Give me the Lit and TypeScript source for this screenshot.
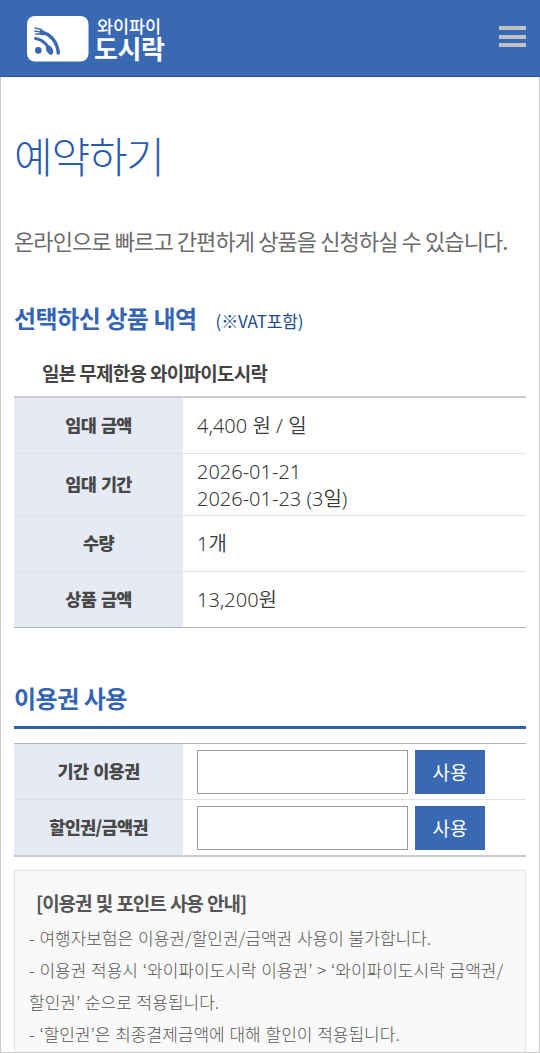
import { LitElement, html, css } from "lit";
import { customElement } from "lit/decorators.js";

@customElement("app-root")
export class AppRoot extends LitElement {
  static styles = css`
    :host {
      display: block;
      height: 1053px;
      overflow: hidden;
      box-sizing: border-box;
      background: #fff;
      font-family: "Noto Sans CJK KR", sans-serif;
      color: #444;
    }
    * { box-sizing: border-box; }
    .page { display: flex; flex-direction: column; height: 1053px; }
    header {
      flex: none;
      height: 77px;
      padding: 0 14px 4px 26px;
      background: #3a69b3;
      border-bottom: 1px solid #2b5196;
      display: flex;
      align-items: center;
      justify-content: space-between;
    }
    .brand { display: flex; align-items: center; gap: 5px; color: #fff; padding-top: 5px; }
    .logo { display: block; width: 63px; height: 46px; }
    .name { display: flex; flex-direction: column; white-space: nowrap; }
    .small { font-size: 17.5px; line-height: 19px; font-weight: 500; letter-spacing: -0.1px; padding-left: 3px; }
    .big { font-size: 26px; line-height: 26px; font-weight: 700; letter-spacing: -0.4px; }
    .menu { display: flex; flex-direction: column; gap: 4.5px; padding-top: 1px; }
    .menu span { width: 27px; height: 4px; background: #c1c1c1; }
    main {
      flex: 1;
      min-height: 0;
      overflow: hidden;
      border: 1px solid #c9c9c9;
      border-top: 0;
      padding: 0 13px;
    }
    h1, h2, p { margin: 0; white-space: nowrap; }
    h1 { margin-top: 48px; font-size: 42px; line-height: 60px; font-weight: 300; letter-spacing: -1.2px; color: #2a5cb0; }
    .lead { margin-top: 39px; font-size: 22px; line-height: 32px; font-weight: 400; letter-spacing: -0.9px; color: #6b6b6b; }
    h2 { font-size: 24px; line-height: 36px; font-weight: 700; letter-spacing: -0.5px; color: #3465b4; }
    .picked { margin-top: 44px; display: flex; align-items: baseline; gap: 19px; }
    .vat { font-size: 17px; letter-spacing: -0.1px; color: #1b4c87; white-space: nowrap; }
    .product { margin-top: 23px; padding-left: 28px; height: 37px; font-size: 19px; line-height: 28px; font-weight: 600; letter-spacing: -0.7px; }
    .table { border-top: 2px solid #c9cbd2; border-bottom: 1px solid #aeb1ba; }
    .row { display: flex; height: 56px; border-top: 1px solid #dfe2ec; }
    .row:first-child { border-top: 0; height: 55px; }
    .row.tall { height: 62px; }
    .th { width: 169px; padding-bottom: 3px; background: #e6eaf4; display: flex; align-items: center; justify-content: center; font-size: 17.5px; font-weight: 900; letter-spacing: -0.7px; word-spacing: 1.5px; color: #484848; }
    .td { flex: 1; display: flex; flex-direction: column; justify-content: center; padding-left: 14px; font-family: "Noto Sans", "Noto Sans CJK KR", sans-serif; font-size: 20px; line-height: 27px; font-weight: 350; color: #3a3a3a; }
    .use { margin-top: 53px; height: 48px; line-height: 34px; border-bottom: 3px solid #2f60b0; }
    .coupon { margin-top: 14px; border-top: 1px solid #aeb1ba; border-bottom: 2px solid #c9cbd2; }
    .coupon .td { flex-direction: row; align-items: center; justify-content: flex-start; gap: 7px; padding-top: 1px; }
    input { width: 211px; height: 44px; border: 1px solid #999; background: #fff; margin: 0; padding: 0 8px; border-radius: 0; font: inherit; }
    button { width: 70px; height: 44px; border: 0; padding: 0 0 2px; margin: 0; background: #3a69b3; color: #fff; font: 400 19px "Noto Sans CJK KR", sans-serif; }
    .notice { margin-top: 13px; height: 260px; border: 1px solid #e6e6e6; background: #f9f9f9; padding: 16px 14px; font-size: 17px; line-height: 32px; font-weight: 300; word-spacing: 1px; color: #555; }
    .notice strong { display: block; margin-bottom: 3px; padding-left: 7px; font-size: 19px; font-weight: 700; letter-spacing: -1.05px; color: #555; }
  `;

  private rows = [
    { label: "임대 금액", lines: ["4,400 원 / 일"] },
    { label: "임대 기간", lines: ["2026-01-21", "2026-01-23 (3일)"] },
    { label: "수량", lines: ["1개"] },
    { label: "상품 금액", lines: ["13,200원"] },
  ];

  private notes = [
    "- 여행자보험은 이용권/할인권/금액권 사용이 불가합니다.",
    "- 이용권 적용시 ‘와이파이도시락 이용권’ > ‘와이파이도시락 금액권/",
    "할인권’ 순으로 적용됩니다.",
    "- ‘할인권’은 최종결제금액에 대해 할인이 적용됩니다.",
  ];

  render() {
    return html`
      <div class="page">
        <header>
          <div class="brand">
            <svg class="logo" viewBox="0 0 63 46">
              <rect x="1" y="0" width="61.5" height="45.5" rx="8" fill="#fff" />
              <g fill="none" stroke="#3a69b3" stroke-linecap="round">
                <path d="M16 16.5C25 18 31.500 27 32.300 37" stroke-width="3.4" />
                <path d="M9.500 22.500Q17 23.500 22 31" stroke-width="3" />
                <path d="M9 12L15.500 13.600M8.800 15L15 16.200M9.500 18L15 18" stroke-width="1.3" />
              </g>
              <path d="M14.500 12.600L20 16.500L17.500 19.500L13.500 18.600Z" fill="#3a69b3" />
              <ellipse cx="23.6" cy="34" rx="3.1" ry="5" transform="rotate(-28 23.6 34)" fill="#3a69b3" />
              <circle cx="12.3" cy="34.4" r="3.3" fill="#3a69b3" />
            </svg>
            <div class="name"><span class="small">와이파이</span><span class="big">도시락</span></div>
          </div>
          <div class="menu"><span></span><span></span><span></span></div>
        </header>
        <main>
          <h1>예약하기</h1>
          <p class="lead">온라인으로 빠르고 간편하게 상품을 신청하실 수 있습니다.</p>
          <div class="picked"><h2>선택하신 상품 내역</h2><span class="vat">(※VAT포함)</span></div>
          <p class="product">일본 무제한용 와이파이도시락</p>
          <div class="table">
            ${this.rows.map((r) => html`
              <div class="row ${r.lines.length > 1 ? "tall" : ""}">
                <div class="th">${r.label}</div>
                <div class="td">${r.lines.map((l) => html`<span>${l}</span>`)}</div>
              </div>`)}
          </div>
          <h2 class="use">이용권 사용</h2>
          <div class="coupon">
            ${["기간 이용권", "할인권/금액권"].map((l) => html`
              <div class="row">
                <div class="th">${l}</div>
                <div class="td"><input type="text" aria-label=${l} /><button>사용</button></div>
              </div>`)}
          </div>
          <div class="notice">
            <strong>[이용권 및 포인트 사용 안내]</strong>
            ${this.notes.map((n) => html`<p>${n}</p>`)}
          </div>
        </main>
      </div>`;
  }
}
